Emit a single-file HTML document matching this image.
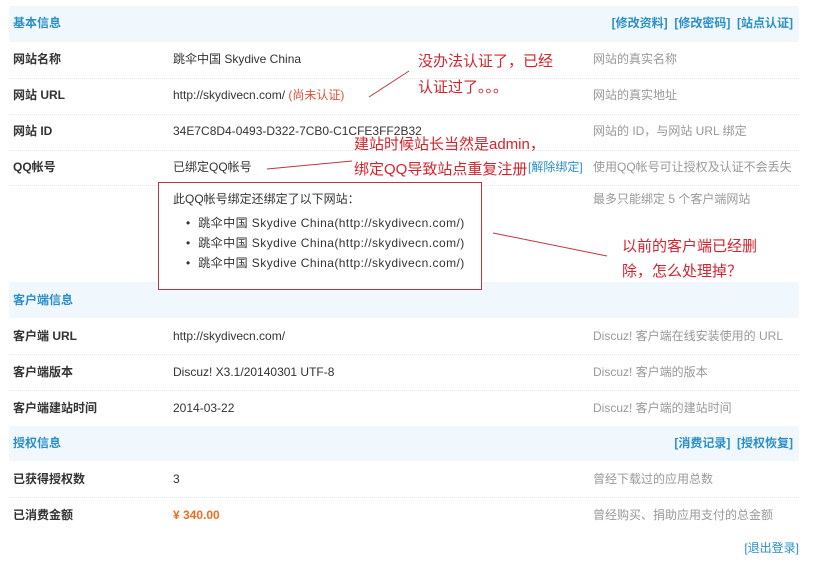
<!DOCTYPE html>
<html><head><meta charset="utf-8"><style>
*{margin:0;padding:0;box-sizing:border-box}
body{width:821px;height:569px;background:#fff;position:relative;overflow:hidden;font-family:"Liberation Sans","Noto Sans CJK SC",sans-serif;font-size:12px;color:#333}
.a{position:absolute;white-space:nowrap;line-height:16px}
.hd{position:absolute;left:9px;width:790px;background:#f0f7fd}
.sep{position:absolute;left:9px;width:790px;border-top:1px dotted #e6e6e6}
.h{color:#2a8fc8;font-weight:bold}
.lk{color:#2a8fc8;font-weight:bold}
.l{font-weight:bold;color:#333}
.d{color:#999}
.r{color:#d5232e;font-size:15px;line-height:20px}
.li{letter-spacing:0.45px}
</style></head><body>
<div class="hd" style="top:6px;height:36px"></div>
<div class="hd" style="top:282px;height:36px"></div>
<div class="hd" style="top:426px;height:35px"></div>
<div class="sep" style="top:78px"></div>
<div class="sep" style="top:114px"></div>
<div class="sep" style="top:150px"></div>
<div class="sep" style="top:185px"></div>
<div class="sep" style="top:354px"></div>
<div class="sep" style="top:390px"></div>
<div class="sep" style="top:497px"></div>

<div class="a h" style="left:13px;top:15px">基本信息</div>
<div class="a lk" style="right:28px;top:15px">[修改资料]&nbsp; [修改密码]&nbsp; [站点认证]</div>
<div class="a l" style="left:13px;top:51px">网站名称</div>
<div class="a" style="left:173px;top:51px">跳伞中国 Skydive China</div>
<div class="a d" style="left:593px;top:51px">网站的真实名称</div>
<div class="a l" style="left:13px;top:87px">网站 URL</div>
<div class="a" style="left:173px;top:87px">http://skydivecn.com/ <span style="color:#e0533a">(尚未认证)</span></div>
<div class="a d" style="left:593px;top:87px">网站的真实地址</div>
<div class="a l" style="left:13px;top:123px">网站 ID</div>
<div class="a" style="left:173px;top:123px">34E7C8D4-0493-D322-7CB0-C1CFE3FF2B32</div>
<div class="a d" style="left:593px;top:123px">网站的 ID，与网站 URL 绑定</div>
<div class="a l" style="left:13px;top:159px">QQ帐号</div>
<div class="a" style="left:173px;top:159px">已绑定QQ帐号</div>
<div class="a" style="left:528px;top:159px;color:#2a8fc8">[解除绑定]</div>
<div class="a d" style="left:593px;top:159px">使用QQ帐号可让授权及认证不会丢失</div>
<div class="a d" style="left:593px;top:191px">最多只能绑定 5 个客户端网站</div>

<div style="position:absolute;left:158px;top:182px;width:324px;height:108px;border:1px solid #c0353f;background:#fff"></div>
<div class="a" style="left:173px;top:191px">此QQ帐号绑定还绑定了以下网站：</div>
<div class="a li" style="left:186px;top:215px">•&nbsp; 跳伞中国 Skydive China(http://skydivecn.com/)</div>
<div class="a li" style="left:186px;top:235px">•&nbsp; 跳伞中国 Skydive China(http://skydivecn.com/)</div>
<div class="a li" style="left:186px;top:255px">•&nbsp; 跳伞中国 Skydive China(http://skydivecn.com/)</div>

<div class="a h" style="left:13px;top:292px">客户端信息</div>
<div class="a l" style="left:13px;top:328px">客户端 URL</div>
<div class="a" style="left:173px;top:328px">http://skydivecn.com/</div>
<div class="a d" style="left:593px;top:328px">Discuz! 客户端在线安装使用的 URL</div>
<div class="a l" style="left:13px;top:364px">客户端版本</div>
<div class="a" style="left:173px;top:364px">Discuz! X3.1/20140301 UTF-8</div>
<div class="a d" style="left:593px;top:364px">Discuz! 客户端的版本</div>
<div class="a l" style="left:13px;top:400px">客户端建站时间</div>
<div class="a" style="left:173px;top:400px">2014-03-22</div>
<div class="a d" style="left:593px;top:400px">Discuz! 客户端的建站时间</div>

<div class="a h" style="left:13px;top:435px">授权信息</div>
<div class="a lk" style="right:28px;top:435px">[消费记录]&nbsp; [授权恢复]</div>
<div class="a l" style="left:13px;top:471px">已获得授权数</div>
<div class="a" style="left:173px;top:471px">3</div>
<div class="a d" style="left:593px;top:471px">曾经下载过的应用总数</div>
<div class="a l" style="left:13px;top:507px">已消费金额</div>
<div class="a" style="left:173px;top:507px;color:#f26c1f;font-weight:bold">¥ 340.00</div>
<div class="a d" style="left:593px;top:507px">曾经购买、捐助应用支付的总金额</div>
<div class="a" style="right:22px;top:540px;color:#2a8fc8">[退出登录]</div>

<svg style="position:absolute;left:0;top:0" width="821" height="569">
<g stroke="#c0353f" stroke-width="1" fill="none">
<line x1="369" y1="97" x2="409" y2="71"/>
<line x1="267" y1="169" x2="352" y2="161"/>
<line x1="493" y1="233" x2="607" y2="256"/>
</g></svg>
<div class="a r" style="left:418px;top:52px">没办法认证了，已经</div>
<div class="a r" style="left:418px;top:78px">认证过了。。。</div>
<div class="a r" style="left:354px;top:135px">建站时候站长当然是admin，</div>
<div class="a r" style="left:354px;top:160px">绑定QQ导致站点重复注册</div>
<div class="a r" style="left:622px;top:237px">以前的客户端已经删</div>
<div class="a r" style="left:622px;top:262px">除，怎么处理掉？</div>
</body></html>
